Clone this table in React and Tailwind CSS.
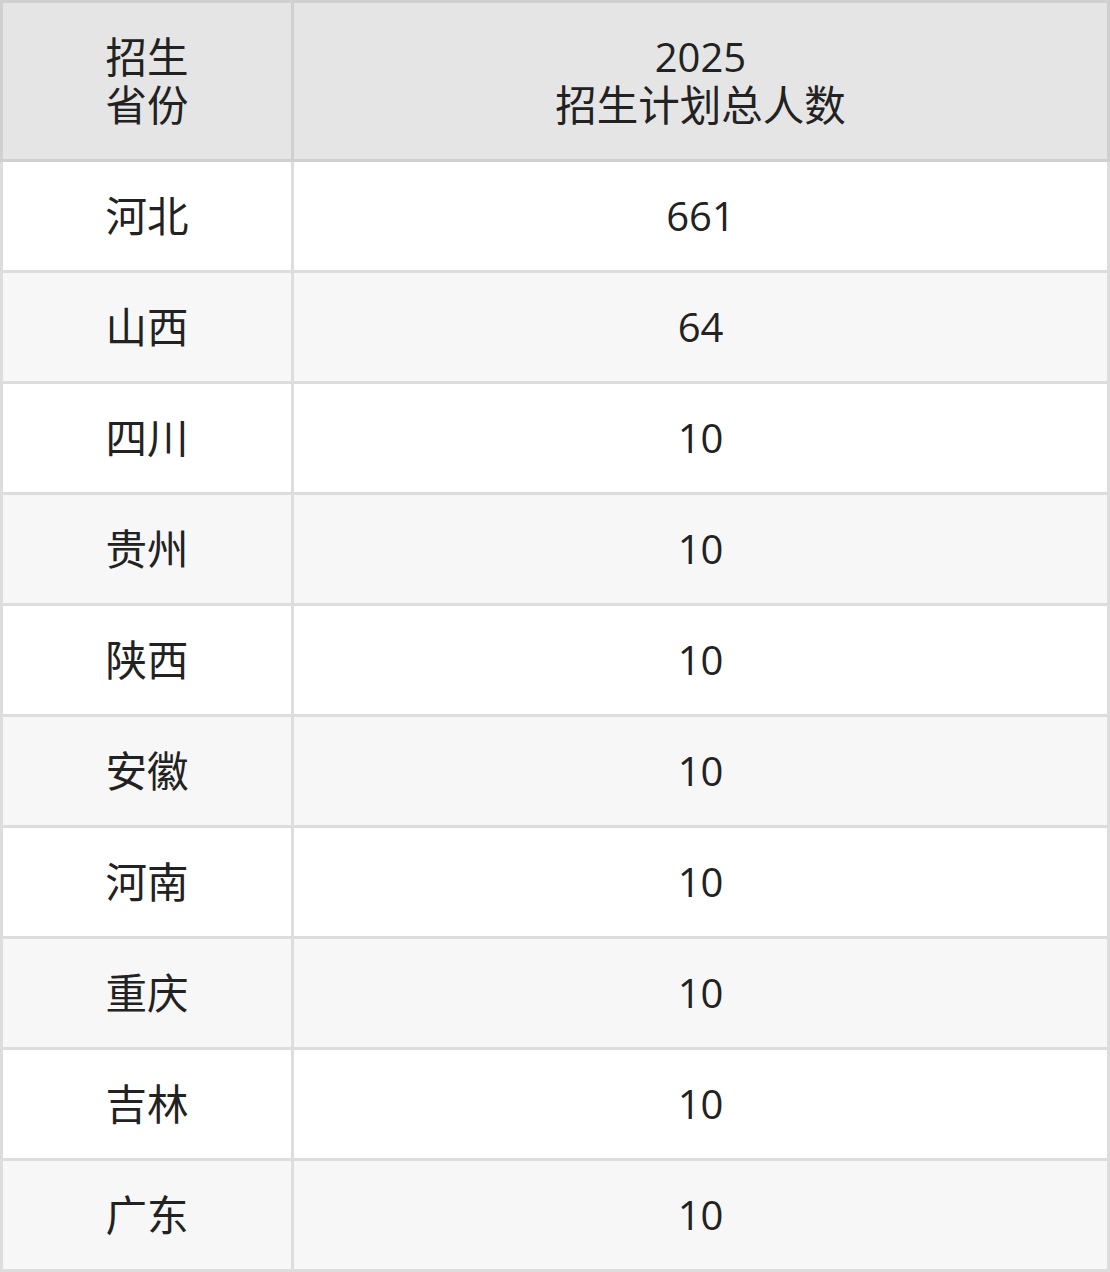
import React from 'react';

const rows = [
  ['河北', '661'],
  ['山西', '64'],
  ['四川', '10'],
  ['贵州', '10'],
  ['陕西', '10'],
  ['安徽', '10'],
  ['河南', '10'],
  ['重庆', '10'],
  ['吉林', '10'],
  ['广东', '10'],
];

export default function App() {
  return (
    <div
      className="w-[1110px] text-[40px] leading-[48px] text-[#222222]"
      style={{ fontFamily: '"Open Sans", "Noto Sans CJK SC", sans-serif' }}
    >
      {/* header */}
      <div className="flex h-[162px] bg-[#e5e5e5] border-[3px] border-[#d0d0d0]">
        <div className="w-[291px] flex items-center justify-center text-center border-r-[3px] border-[#d0d0d0]">
          <div className="text-[41.5px]">
            招生
            <br />
            省份
          </div>
        </div>
        <div className="flex-1 flex items-center justify-center text-center">
          <div>
            2025
            <br />
            <span className="text-[41.5px]">招生计划总人数</span>
          </div>
        </div>
      </div>

      {/* body */}
      {rows.map(([province, count], i) => (
        <div
          key={province}
          className={`flex h-[111px] border-x-[3px] border-b-[3px] border-[#dddddd] ${
            i % 2 === 1 ? 'bg-[#f7f7f7]' : 'bg-white'
          }`}
        >
          <div className="w-[291px] flex items-center justify-center text-[41.5px] border-r-[3px] border-[#dddddd]">
            {province}
          </div>
          <div className="flex-1 flex items-center justify-center">{count}</div>
        </div>
      ))}
    </div>
  );
}
